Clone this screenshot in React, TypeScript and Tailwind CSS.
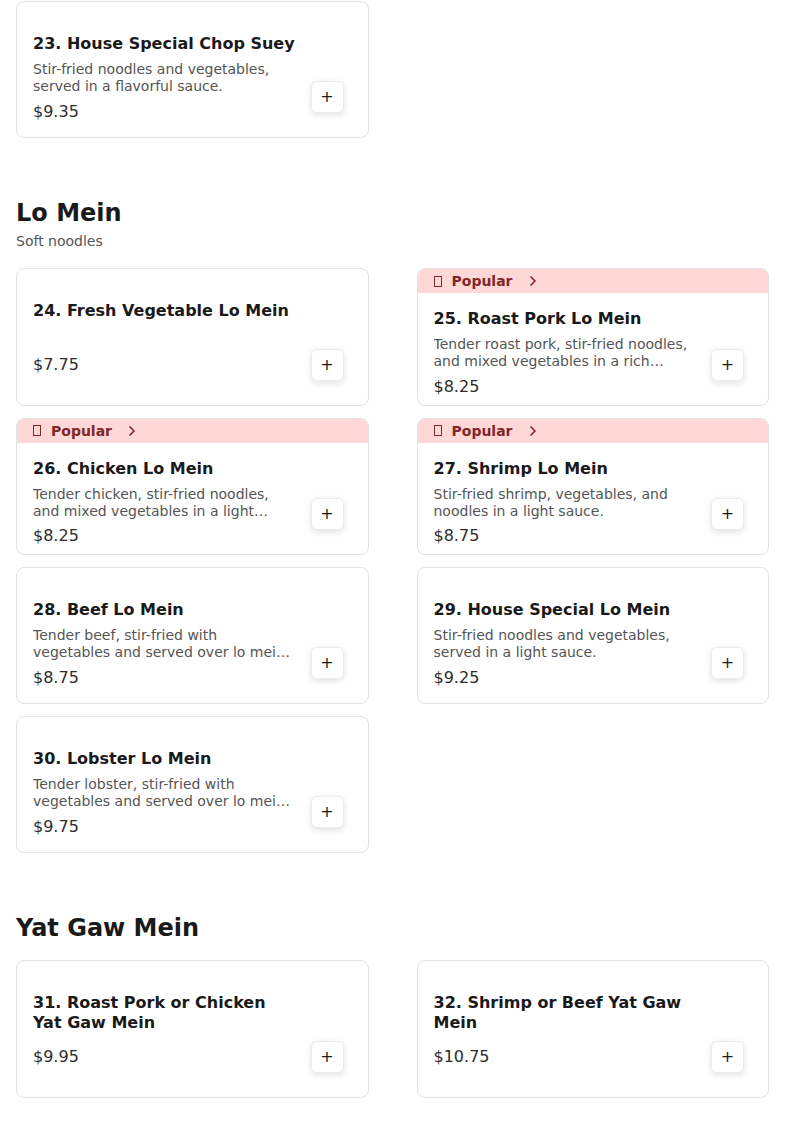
import React from 'react';
import { ChevronRight } from 'lucide-react';

interface MenuItem {
  name: string;
  description?: string;
  price: string;
  popular?: boolean;
}

interface MenuSection {
  title?: string;
  subtitle?: string;
  items: MenuItem[];
}

const sections: MenuSection[] = [
  {
    items: [
      {
        name: '23. House Special Chop Suey',
        description: 'Stir-fried noodles and vegetables, served in a flavorful sauce.',
        price: '$9.35',
      },
    ],
  },
  {
    title: 'Lo Mein',
    subtitle: 'Soft noodles',
    items: [
      { name: '24. Fresh Vegetable Lo Mein', price: '$7.75' },
      {
        name: '25. Roast Pork Lo Mein',
        description: 'Tender roast pork, stir-fried noodles, and mixed vegetables in a rich savory sauce.',
        price: '$8.25',
        popular: true,
      },
      {
        name: '26. Chicken Lo Mein',
        description: 'Tender chicken, stir-fried noodles, and mixed vegetables in a light savory sauce.',
        price: '$8.25',
        popular: true,
      },
      {
        name: '27. Shrimp Lo Mein',
        description: 'Stir-fried shrimp, vegetables, and noodles in a light sauce.',
        price: '$8.75',
        popular: true,
      },
      {
        name: '28. Beef Lo Mein',
        description: 'Tender beef, stir-fried with vegetables and served over lo mein noodles.',
        price: '$8.75',
      },
      {
        name: '29. House Special Lo Mein',
        description: 'Stir-fried noodles and vegetables, served in a light sauce.',
        price: '$9.25',
      },
      {
        name: '30. Lobster Lo Mein',
        description: 'Tender lobster, stir-fried with vegetables and served over lo mein noodles.',
        price: '$9.75',
      },
    ],
  },
  {
    title: 'Yat Gaw Mein',
    items: [
      { name: '31. Roast Pork or Chicken Yat Gaw Mein', price: '$9.95' },
      { name: '32. Shrimp or Beef Yat Gaw Mein', price: '$10.75' },
    ],
  },
];

const ItemCard: React.FC<{ item: MenuItem }> = ({ item }) => {
  return (
    <div className="h-[137.3px] flex flex-col rounded-lg border border-[#e2e2e2] bg-white overflow-hidden">
      {item.popular && (
        <div className="h-6 shrink-0 flex items-center px-4 bg-[#fed7d7] text-sm font-bold text-[#822727]">
          {/* missing-glyph box, as the emoji shows in the original */}
          <span className="inline-block w-[8px] h-[11px] border border-current mr-[10px]" />
          <span>Popular</span>
          <ChevronRight size={16} strokeWidth={2.5} className="ml-3" />
        </div>
      )}
      <div className={`flex-1 min-h-0 flex gap-3 pl-4 pr-6 pb-6 ${item.popular ? 'pt-4' : 'pt-8'}`}>
        <div className="flex-1 min-w-0 flex flex-col">
          <h3 className="shrink-0 text-base font-bold leading-[1.2] text-[#1a1a1a]">{item.name}</h3>
          {item.description && (
            <p className="shrink-0 mt-2 text-sm leading-[1.2] text-[#555] line-clamp-2">{item.description}</p>
          )}
          <p
            className={`shrink-0 text-base leading-6 text-[#2d2d2d] ${item.description ? 'mt-[5px]' : 'mt-auto mb-1'}`}
          >
            {item.price}
          </p>
        </div>
        <button className="self-end shrink-0 w-[33px] h-8 flex items-center justify-center rounded-md border border-[#ececec] bg-white text-base text-[#1a1a1a] shadow-[0_2px_6px_rgba(0,0,0,0.12)]">
          +
        </button>
      </div>
    </div>
  );
};

const App: React.FC = () => {
  return (
    <div className="min-h-screen bg-white px-4 pt-px font-['DejaVu_Sans',sans-serif]">
      {sections.map((section, i) => (
        <section key={i} className={i > 0 ? 'pt-[59px]' : ''}>
          {section.title && (
            <div className="mb-4">
              <h2 className={`text-2xl font-bold text-[#1a1a1a] ${section.subtitle ? '' : 'mb-[6px]'}`}>
                {section.title}
              </h2>
              {section.subtitle && <p className="mt-[2px] pb-px text-sm text-[#555]">{section.subtitle}</p>}
            </div>
          )}
          <div className="grid grid-cols-2 gap-x-12 gap-y-3">
            {section.items.map((item) => (
              <ItemCard key={item.name} item={item} />
            ))}
          </div>
        </section>
      ))}
    </div>
  );
};

export default App;
